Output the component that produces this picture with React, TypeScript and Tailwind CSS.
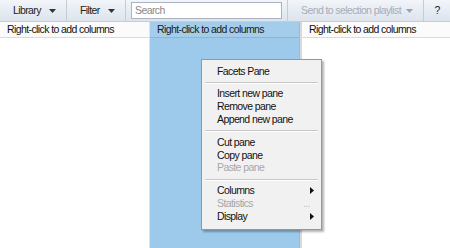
const font = { fontFamily: "'Liberation Sans', Arial, sans-serif" };

function Caret({ dim }: { dim?: boolean }) {
  return (
    <svg width="7" height="4" viewBox="0 0 7 4" className="ml-auto shrink-0">
      <path d="M0 0h7L3.5 4z" fill={dim ? "#9aa3ad" : "#333"} />
    </svg>
  );
}

function ToolButton({ label, w, dim }: { label: string; w: string; dim?: boolean }) {
  return (
    <div
      className={`flex items-center h-full pl-[13px] pr-[10px] border-r border-[#c5ccd6] whitespace-nowrap ${w} ${
        dim ? "text-[#a7adb5]" : "text-[#222]"
      }`}
    >
      <span>{label}</span>
      <Caret dim={dim} />
    </div>
  );
}

function Header({ selected }: { selected?: boolean }) {
  return (
    <div
      className={`h-[16px] flex items-center px-[7px] border-b whitespace-nowrap ${
        selected ? "bg-[#a3cdea] border-[#86b6d8] text-[#1a1a1a]" : "bg-[#fbfbfb] border-[#dadada] text-[#111]"
      }`}
    >
      Right-click to add columns
    </div>
  );
}

type Item = { label: string; disabled?: boolean; sub?: boolean; dots?: boolean; sep?: boolean };

const items: Item[] = [
  { label: "Facets Pane" },
  { label: "", sep: true },
  { label: "Insert new pane" },
  { label: "Remove pane" },
  { label: "Append new pane" },
  { label: "", sep: true },
  { label: "Cut pane" },
  { label: "Copy pane" },
  { label: "Paste pane", disabled: true },
  { label: "", sep: true },
  { label: "Columns", sub: true },
  { label: "Statistics", disabled: true, dots: true },
  { label: "Display", sub: true },
];

function Menu() {
  return (
    <div className="absolute left-[201px] top-[59px] w-[121px] bg-[#f1f1f1] border border-[#979797] shadow-[2px_2px_2px_rgba(0,0,0,0.3)] pt-[5px] pb-[6px]">
      {items.map((it, i) =>
        it.sep ? (
          <div key={i} className="mx-[3px] my-[4px] h-[2px] border-t border-[#c8c8c8] border-b border-b-white" />
        ) : (
          <div
            key={i}
            className={`h-[12.8px] flex items-center pl-[15px] pr-[7px] whitespace-nowrap ${
              it.disabled ? "text-[#a8a8a8]" : "text-[#111]"
            }`}
          >
            <span>{it.label}</span>
            {it.sub && (
              <svg width="4" height="7" viewBox="0 0 4 7" className="ml-auto">
                <path d="M0 0l4 3.5L0 7z" fill="#111" />
              </svg>
            )}
            {it.dots && <span className="ml-auto mr-[4px] text-[#c0c0c0]">...</span>}
          </div>
        )
      )}
    </div>
  );
}

export default function App() {
  return (
    <div className="relative w-[450px] h-[248px] bg-white text-[10.5px] tracking-[-0.6px] overflow-hidden" style={font}>
      {/* TOOLBAR */}
      <div className="h-[22px] flex items-center bg-gradient-to-b from-[#f2f5f9] to-[#dde4ed] border-b border-[#c6cdd6]">
        <ToolButton label="Library" w="w-[67px]" />
        <ToolButton label="Filter" w="w-[59px]" />
        <div className="px-[5px] h-full flex items-center border-r border-[#c5ccd6]">
          <div className="w-[151px] h-[17px] bg-white border border-[#aab3bf] flex items-center px-[3px] text-[#888]">
            Search
          </div>
        </div>
        <ToolButton label="Send to selection playlist" w="w-[136px]" dim />
        <div className="flex-1 flex items-center justify-center h-full text-[#222]">?</div>
      </div>
      {/* PANES */}
      <div className="flex h-[226px]">
        <div className="w-[150px] border-r border-[#e2e2e2]">
          <Header />
        </div>
        <div className="w-[149px] bg-[#9dcaea]">
          <Header selected />
        </div>
        <div className="w-[3px] bg-[#d9d9d9] border-l border-[#b5b5b5]" />
        <div className="flex-1">
          <Header />
        </div>
      </div>
      <Menu />
    </div>
  );
}
